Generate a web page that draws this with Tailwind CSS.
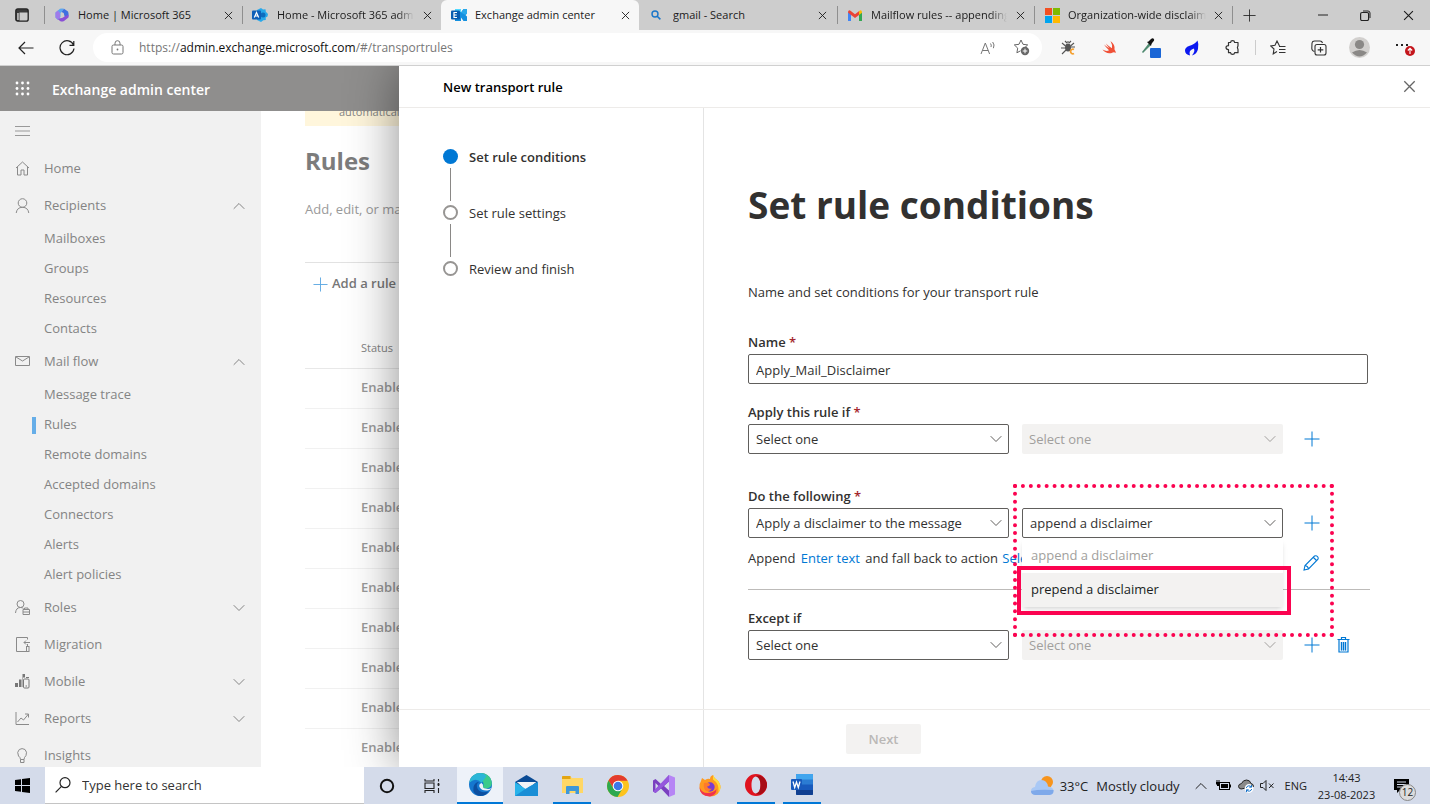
<!DOCTYPE html>
<html lang="en">
<head>
    <meta charset="UTF-8">
    <meta name="viewport" content="width=device-width, initial-scale=1.0">
    <title>Exchange admin center</title>
    <script src="https://cdn.jsdelivr.net/npm/@tailwindcss/browser@4"></script>
</head>
<body class="h-screen flex flex-col overflow-hidden bg-white text-[13px] text-[#323130] font-['Open_Sans','Noto_Sans',sans-serif]">

    <!-- Shared icons -->
    <svg class="hidden">
        <symbol id="x" viewBox="0 0 10 10"><path d="M1 1l8 8M9 1L1 9" fill="none" stroke="currentColor"/></symbol>
        <symbol id="plus" viewBox="0 0 16 16"><path d="M8 .5v15M.5 8h15" fill="none" stroke="currentColor"/></symbol>
        <symbol id="down" viewBox="0 0 12 8"><path d="M.7 1.2L6 6.5l5.300-5.300" fill="none" stroke="currentColor"/></symbol>
        <symbol id="up" viewBox="0 0 12 8"><path d="M.7 6.800L6 1.500l5.300 5.300" fill="none" stroke="currentColor"/></symbol>
    </svg>

    <!-- Tab strip -->
    <div class="h-[30px] shrink-0 flex bg-[#cdcdcd] text-[11px] text-[#1b1b1b]">
        <div class="w-[44px] flex items-center justify-center">
            <svg class="size-[14px]" viewBox="0 0 14 14"><rect x=".8" y=".8" width="12.400" height="12.400" rx="2" fill="none" stroke="#222" stroke-width="1.300"/><path d="M1 1h12v3.500H4.500V13H1z" fill="#222" opacity=".85"/><path d="M2.200 5h1.500v7H2.200z" fill="#cdcdcd"/></svg>
        </div>
        <div class="w-[198px] flex items-center border-l border-[#8f8f8f] my-[6px] pl-[10px] pr-[9px] gap-[9px]">
            <svg class="size-[14px] shrink-0" viewBox="0 0 14 14"><path d="M5 .8Q7 0 9 .8L7 3.500 5.500 5v4L3 12 .5 9.500V4.500z" fill="#5aa7ef"/><path d="M9 .8l4 2.700q.8 1 .5 5L10 10 8.700 5 6.500 4z" fill="#3f6fe0"/><path d="M.5 9l3 1.500L7 10l6.500-3.500v3L9 13q-2 1-4 0z" fill="#8a4fd6"/><path d="M.5 4.500L3 2.500l2 2.500v4l-2 2.500-2.500-2z" fill="#a07bea"/></svg>
            <span class="flex-1 overflow-hidden whitespace-nowrap">Home | Microsoft 365</span>
            <button aria-label="Close tab"><svg class="size-[9px]"><use href="#x"/></svg></button>
        </div>
        <div class="w-[199px] flex items-center border-l border-[#8f8f8f] my-[6px] pl-[9px] pr-[9px] gap-[9px]">
            <svg class="size-[16px] shrink-0" viewBox="0 0 16 16"><path d="M9 1l2 1.500 2.500-.3.300 2.500L16 7l-.5 2.500-1.800 1 .1 2.500-2.500.300L9 15l-4-2V3z" fill="#28a8ea"/><circle cx="11" cy="8" r="2.500" fill="#0f6cbd"/><rect y="3.500" width="9" height="9" rx="1" fill="#0f5fb8"/><path d="M2.300 10.500l2.200-5 2.200 5M3 9h3" fill="none" stroke="#fff" stroke-width="1.200"/></svg>
            <span class="flex-1 overflow-hidden whitespace-nowrap [mask-image:linear-gradient(to_right,#000_88%,transparent)]">Home - Microsoft 365 admin center</span>
            <button aria-label="Close tab"><svg class="size-[9px]"><use href="#x"/></svg></button>
        </div>
        <div class="w-[198px] flex items-center bg-[#f7f7f7] rounded-t-md pl-[10px] pr-[9px] gap-[8px]">
            <svg class="size-[16px] shrink-0" viewBox="0 0 16 16"><path d="M4 2h6v3.500L12.500 2H16v4.500L14.500 8l1.500 1.500V14h-3.500L10 10.500V14H4z" fill="#1490df"/><path d="M4 2h6v3H4z" fill="#50d9ff"/><path d="M12.500 2H16v4.500L14.500 8 10 5.500z" fill="#28a8ea"/><rect y="3.500" width="9" height="9" rx="1" fill="#0a5cb0"/><path d="M6 5.500H3v5h3M3 8h2.700" fill="none" stroke="#fff" stroke-width="1.200"/></svg>
            <span class="flex-1 overflow-hidden whitespace-nowrap">Exchange admin center</span>
            <button aria-label="Close tab"><svg class="size-[9px]"><use href="#x"/></svg></button>
        </div>
        <div class="w-[198px] flex items-center my-[6px] pl-[12px] pr-[10px] gap-[12px]">
            <svg class="size-[10px] shrink-0" viewBox="0 0 10 10"><circle cx="4" cy="4" r="3" fill="none" stroke="#1a76c9" stroke-width="1.400"/><path d="M6.200 6.200L9.400 9.400" stroke="#1a76c9" stroke-width="1.500"/></svg>
            <span class="flex-1 overflow-hidden whitespace-nowrap">gmail - Search</span>
            <button aria-label="Close tab"><svg class="size-[9px]"><use href="#x"/></svg></button>
        </div>
        <div class="w-[197px] flex items-center border-l border-[#8f8f8f] my-[6px] pl-[10px] pr-[9px] gap-[9px]">
            <svg class="w-[14px] h-[11px] shrink-0" viewBox="0 0 14 11"><path d="M0 2v9h3V4z" fill="#4285f4"/><path d="M14 2v9h-3V4z" fill="#34a853"/><path d="M0 2Q.5-.5 2.500.700L7 4.200 11.500.700 11 5 7 8 3 5 0 2.500z" fill="#ea4335"/><path d="M11 1.200Q13.500-.8 14 2v.8L11 5z" fill="#fbbc04"/></svg>
            <span class="flex-1 overflow-hidden whitespace-nowrap [mask-image:linear-gradient(to_right,#000_88%,transparent)]">Mailflow rules -- appending disclaimer</span>
            <button aria-label="Close tab"><svg class="size-[9px]"><use href="#x"/></svg></button>
        </div>
        <div class="w-[199px] flex items-center border-x border-[#8f8f8f] my-[6px] pl-[10px] pr-[9px] gap-[8px]">
            <svg class="size-[15px] shrink-0" viewBox="0 0 15 15"><path d="M0 0h7v7H0z" fill="#f25022"/><path d="M8 0h7v7H8z" fill="#7fba00"/><path d="M0 8h7v7H0z" fill="#00a4ef"/><path d="M8 8h7v7H8z" fill="#ffb900"/></svg>
            <span class="flex-1 overflow-hidden whitespace-nowrap [mask-image:linear-gradient(to_right,#000_88%,transparent)]">Organization-wide disclaimers</span>
            <button aria-label="Close tab"><svg class="size-[9px]"><use href="#x"/></svg></button>
        </div>
        <button class="w-[33px] flex items-center justify-center" aria-label="New tab"><svg class="size-[13px]"><use href="#plus"/></svg></button>
        <div class="ml-auto flex">
            <button class="w-[43px] flex items-center justify-center" aria-label="Minimize"><svg class="w-[10px] h-[2px]"><path d="M0 1h10" stroke="#222"/></svg></button>
            <button class="w-[43px] flex items-center justify-center" aria-label="Restore"><svg class="size-[11px]" viewBox="0 0 11 11"><path d="M3 1h5a2 2 0 0 1 2 2v5" fill="none" stroke="#222"/><rect x=".6" y="2.500" width="8" height="8" rx="1.500" fill="none" stroke="#222" stroke-width="1.200"/></svg></button>
            <button class="w-[43px] flex items-center justify-center" aria-label="Close"><svg class="size-[11px]"><use href="#x"/></svg></button>
        </div>
    </div>

    <!-- Address bar -->
    <div class="h-[36px] shrink-0 flex items-center bg-[#f7f7f7] border-b border-[#d0d0d0] text-[#333]">
        <button class="w-[48px] pl-[18px]" aria-label="Back"><svg class="w-[16px] h-[14px]" viewBox="0 0 16 14"><path d="M7 1L1 7l6 6M1 7h14.500" fill="none" stroke="#222" stroke-width="1.200"/></svg></button>
        <button class="w-[45px] pl-[11px]" aria-label="Refresh"><svg class="size-[16px]" viewBox="0 0 16 16"><path d="M14.500 5A7 7 0 1 0 15 8.500M14.800 1v4.300h-4.300" fill="none" stroke="#222" stroke-width="1.200"/></svg></button>
        <div class="flex-1 h-[29px] flex items-center rounded-full bg-white pl-[18px] pr-[12px]">
            <svg class="w-[13px] h-[15px]" viewBox="0 0 13 15"><rect x="1" y="5" width="11" height="9" rx="1.500" fill="none" stroke="#777"/><path d="M4 5V3.200a2.500 2.500 0 0 1 5 0V5" fill="none" stroke="#777"/><circle cx="6.500" cy="9.500" r=".9" fill="#777"/></svg>
            <div role="textbox" aria-label="Address" class="flex-1 ml-[15px] text-[12px] text-[#767676] whitespace-nowrap">https://<span class="text-[#111]">admin.exchange.microsoft.com</span>/#/transportrules</div>
            <svg class="w-[16px] h-[14px] mr-[17px]" viewBox="0 0 16 14"><path d="M1 13L5.300 2l4.300 11M2.500 9.500h5.700M10.500 2.500q1.300 1.500.5 3.500M12.700 1q2.300 2.800.700 6.200" fill="none" stroke="#777"/></svg>
            <svg class="size-[17px]" viewBox="0 0 17 17"><path d="M8 1l2 4.300 4.700.6-3.400 3.200M8 1L6 5.300l-4.700.6 3.400 3.200-.8 4.700L7.500 11.800" fill="none" stroke="#666"/><circle cx="12" cy="12" r="4.200" fill="#666"/><path d="M12 9.700v4.600M9.700 12h4.600" stroke="#fff"/></svg>
        </div>
        <div class="w-[388px] grid grid-cols-[repeat(5,41px)_4px_repeat(3,41px)_50px] items-center justify-items-center pl-[6px]">
            <svg class="size-[15px]" viewBox="0 0 15 15"><ellipse cx="7" cy="7.500" rx="3" ry="4" fill="#555"/><path d="M7 3V1M4 1l2 2M10 1L8 3M1 3l3.500 3M13 3L9.500 6M0 8h5M1 14l4-4M14 7H9" stroke="#555" stroke-width="1.100"/><path d="M13 9.500a2.300 2.300 0 1 0 0 4" fill="none" stroke="#f5a030" stroke-width="1.800"/></svg>
            <svg class="size-[15px]" viewBox="0 0 15 15"><path d="M8.500 1q5 4 4 8.500 1.500 2 1.300 3.500-1.500-1.300-3-.6Q5 15 .5 9.500q4 2.300 6.500.8Q4 7.500 2 4.500 5.500 7.300 7.500 8.300 5.300 6 3.800 3.500 7 6.500 10 8.300 10.700 5 8.500 1z" fill="#f05138"/></svg>
            <svg class="size-[20px]" viewBox="0 0 20 20"><path d="M1 14l7-9 2 2-8 8z" fill="#4f8a70"/><path d="M6 4l1.500-.5L10 1q2-1.500 3 .3.500 1.400-1 2.500L10.500 6 10 8z" fill="#111"/><rect x="9" y="10" width="11" height="10" rx="1" fill="#1a66d6"/></svg>
            <svg class="w-[15px] h-[16px]" viewBox="0 0 15 16"><path fill-rule="evenodd" d="M13.500.5Q15 4 14 9q-1 5-6 6.500.5-1 1.500-2.200Q11 11 10 8.500 7.500 9 6 11q-1 2 0 4.500Q1 14.500 1 10.500 1 7.500 5 6q6-2 8.500-5.500z" fill="#0b18f0"/></svg>
            <svg class="size-[15px]" viewBox="0 0 15 15"><path d="M3.500 2.500h2.100q.1-1.800 2-1.800t2 1.800H13v3.300l-.6 1.800.6 1.900v3.200H9.600q-.1 1.700-2 1.700t-2-1.700H3.500V9.700Q1 9.500 1 7.600t2.500-1.900z" fill="none" stroke="#333" stroke-width="1.200" stroke-linejoin="round"/></svg>
            <span class="w-px h-[15px] bg-[#ccc]"></span>
            <svg class="size-[16px]" viewBox="0 0 16 16"><path d="M9.500 6L7 1 5 5.300 .8 6l3.200 3-.8 4.800L7 11.500M9 6.500h6.500M9 9.500h6.500M9 12.500h6.500" fill="none" stroke="#333" stroke-width="1.100"/></svg>
            <svg class="size-[16px]" viewBox="0 0 16 16"><path d="M3.500 11.500Q1 11 .8 8.500L1 3q.3-2 2.500-2H9q2 0 2.500 2" fill="none" stroke="#333" stroke-width="1.100"/><rect x="4" y="4.500" width="11" height="10.500" rx="2" fill="none" stroke="#333" stroke-width="1.100"/><path d="M9.500 7v5.600M6.700 9.800h5.600" stroke="#333" stroke-width="1.200"/></svg>
            <svg class="size-[21px]" viewBox="0 0 21 21"><circle cx="10.500" cy="10.500" r="10.500" fill="#d2d0ce"/><circle cx="10.500" cy="7.500" r="4.600" fill="#8a8886"/><path d="M3 15.500q7.500-5 15 0-7.500 8-15 0z" fill="#8a8886"/></svg>
            <svg class="w-[20px] h-[18px]" viewBox="0 0 20 18"><path d="M1 6h2M6 6h2M11 6h2" stroke="#222" stroke-width="2"/><circle cx="15" cy="12" r="5" fill="#c4161c"/><path d="M15 15V9.500M12.800 11.500L15 9.300l2.200 2.200" fill="none" stroke="#fff" stroke-width="1.100"/></svg>
        </div>
    </div>

    <div class="flex-1 min-h-0 flex">

        <!-- Admin center, behind the panel -->
        <div class="w-[399px] shrink-0 flex flex-col overflow-hidden text-[#848484]">
            <header class="h-[45px] shrink-0 flex items-center gap-[22px] pl-[15px] bg-[#8f8e8d] text-white">
                <svg class="size-[15px]" viewBox="0 0 15 15" fill="#fff"><circle cx="2" cy="2" r="1.400"/><circle cx="7.500" cy="2" r="1.400"/><circle cx="13" cy="2" r="1.400"/><circle cx="2" cy="7.500" r="1.400"/><circle cx="7.500" cy="7.500" r="1.400"/><circle cx="13" cy="7.500" r="1.400"/><circle cx="2" cy="13" r="1.400"/><circle cx="7.500" cy="13" r="1.400"/><circle cx="13" cy="13" r="1.400"/></svg>
                <span class="pt-[2px] text-[14px] font-semibold whitespace-nowrap">Exchange admin center</span>
            </header>
            <div class="flex-1 min-h-0 flex">
                <nav class="w-[261px] shrink-0 bg-[#f1f1f1] overflow-hidden">
                    <button class="h-[39px] pl-[15px] flex items-center" aria-label="Menu"><svg class="w-[15px] h-[10px]" viewBox="0 0 15 10"><path d="M0 .5h15M0 5h15M0 9.500h15" stroke="#999"/></svg></button>
                    <a href="#" class="h-[37px] flex items-center pl-[15px] pr-[16px] gap-[14px]">
                        <svg class="size-[15px]" viewBox="0 0 15 15" fill="none" stroke="#8a8a8a"><path d="M1 7l6.500-6L14 7M2.500 6v8H6V9h3v5h3.500V6"/></svg>
                        <span class="flex-1">Home</span>
                    </a>
                    <a href="#" class="h-[37px] flex items-center pl-[15px] pr-[16px] gap-[14px]">
                        <svg class="size-[15px]" viewBox="0 0 15 15" fill="none" stroke="#8a8a8a"><circle cx="7.500" cy="5" r="4.300"/><path d="M1.200 15Q2 9.300 7.500 9.300T13.800 15"/></svg>
                        <span class="flex-1">Recipients</span>
                        <svg class="w-[12px] h-[8px]"><use href="#up"/></svg>
                    </a>
                    <div class="-mb-px">
                        <a href="#" class="h-[30px] flex items-center pl-[44px]">Mailboxes</a>
                        <a href="#" class="h-[30px] flex items-center pl-[44px]">Groups</a>
                        <a href="#" class="h-[30px] flex items-center pl-[44px]">Resources</a>
                        <a href="#" class="h-[30px] flex items-center pl-[44px]">Contacts</a>
                    </div>
                    <a href="#" class="h-[37px] flex items-center pl-[15px] pr-[16px] gap-[14px]">
                        <svg class="size-[15px]" viewBox="0 0 15 15" fill="none" stroke="#8a8a8a"><path d="M.5 2.500h14v9H.5zM1 3l6.500 4L14 3"/></svg>
                        <span class="flex-1">Mail flow</span>
                        <svg class="w-[12px] h-[8px]"><use href="#up"/></svg>
                    </a>
                    <div class="-mb-px">
                        <a href="#" class="h-[30px] flex items-center pl-[44px]">Message trace</a>
                        <a href="#" class="h-[30px] flex items-center pl-[32px] gap-[8px]"><span class="w-[4px] h-[17px] bg-[#66aee8]"></span>Rules</a>
                        <a href="#" class="h-[30px] flex items-center pl-[44px]">Remote domains</a>
                        <a href="#" class="h-[30px] flex items-center pl-[44px]">Accepted domains</a>
                        <a href="#" class="h-[30px] flex items-center pl-[44px]">Connectors</a>
                        <a href="#" class="h-[30px] flex items-center pl-[44px]">Alerts</a>
                        <a href="#" class="h-[30px] flex items-center pl-[44px]">Alert policies</a>
                    </div>
                    <a href="#" class="h-[37px] flex items-center pl-[15px] pr-[16px] gap-[14px]">
                        <svg class="size-[15px]" viewBox="0 0 15 15" fill="none" stroke="#8a8a8a"><circle cx="5.500" cy="4" r="3.500"/><path d="M.5 13Q1 7.500 5.500 7.500q2 0 3 1M8 9.500h6.500v5H8zM9.500 9.500V8H13v1.500M8 12h6.500"/></svg>
                        <span class="flex-1">Roles</span>
                        <svg class="w-[12px] h-[8px]"><use href="#down"/></svg>
                    </a>
                    <a href="#" class="h-[37px] flex items-center pl-[15px] pr-[16px] gap-[14px]">
                        <svg class="size-[15px]" viewBox="0 0 15 15" fill="none" stroke="#8a8a8a"><path d="M12.500 2.500v-2h-11v14h10M9 5.500h6M11 3.500l-2 2 2 2M12.500 7v2.500"/><rect x="11.500" y="9.500" width="2.500" height="5"/></svg>
                        <span class="flex-1">Migration</span>
                    </a>
                    <a href="#" class="h-[37px] flex items-center pl-[15px] pr-[16px] gap-[14px]">
                        <svg class="size-[15px]" viewBox="0 0 15 15"><path d="M0 9h3v4H0zM4 5.500h2.500V13H4zM7.500 0H10v3.500H8V13h-.5zM11 3h3v1h-3z" fill="#777"/><rect x="8.500" y="5" width="5.500" height="9" rx="1" fill="none" stroke="#777"/><path d="M10.500 12h1.500" stroke="#777"/></svg>
                        <span class="flex-1">Mobile</span>
                        <svg class="w-[12px] h-[8px]"><use href="#down"/></svg>
                    </a>
                    <a href="#" class="h-[37px] flex items-center pl-[15px] pr-[16px] gap-[14px]">
                        <svg class="size-[15px]" viewBox="0 0 15 15" fill="none" stroke="#8a8a8a"><path d="M1 1v12.500h13M2.500 11l3.500-4 2.500 2 5-6M10 3h3.500v3.500"/></svg>
                        <span class="flex-1">Reports</span>
                        <svg class="w-[12px] h-[8px]"><use href="#down"/></svg>
                    </a>
                    <a href="#" class="h-[37px] flex items-center pl-[15px] pr-[16px] gap-[14px]">
                        <svg class="size-[15px]" viewBox="0 0 15 15" fill="none" stroke="#8a8a8a"><path d="M5.500 11.500Q5.500 9.500 3.500 8q-2-4 .8-6.500Q7-.3 10 1.500q2.500 2.500 1 6-2 2-2 4zM5.500 11.500v3H9v-3"/></svg>
                        <span class="flex-1">Insights</span>
                    </a>
                </nav>
                <main class="flex-1 pl-[44px] overflow-hidden whitespace-nowrap">
                    <p class="h-[15px] pl-[34px] bg-[#fff6dc] overflow-hidden text-[11px] leading-[2px]">automatically</p>
                    <h1 class="mt-[18px] text-[24px] leading-[34px] font-bold text-[#7c7c7c]">Rules</h1>
                    <p class="mt-[21px] leading-[20px] text-[#9a9a9a]">Add, edit, or manage rules</p>
                    <div class="mt-[43px] h-[43px] border-t border-[#e2e2e2] flex items-center gap-[4px] pl-[8px] font-semibold text-[#777]">
                        <svg class="size-[15px] text-[#5ea9e2]"><use href="#plus"/></svg>
                        <button>Add a rule</button>
                    </div>
                    <table class="mt-[24px] w-full text-left">
                        <thead>
                            <tr class="h-[39px] border-b border-[#e8e8e8]"><th class="pl-[56px] font-normal text-[11px]">Status</th></tr>
                        </thead>
                        <tbody class="font-semibold text-[#999]">
                            <tr class="h-[40px] border-b border-[#f1f1f1]"><td class="pl-[56px]">Enabled</td></tr>
                            <tr class="h-[40px] border-b border-[#f1f1f1]"><td class="pl-[56px]">Enabled</td></tr>
                            <tr class="h-[40px] border-b border-[#f1f1f1]"><td class="pl-[56px]">Enabled</td></tr>
                            <tr class="h-[40px] border-b border-[#f1f1f1]"><td class="pl-[56px]">Enabled</td></tr>
                            <tr class="h-[40px] border-b border-[#f1f1f1]"><td class="pl-[56px]">Enabled</td></tr>
                            <tr class="h-[40px] border-b border-[#f1f1f1]"><td class="pl-[56px]">Enabled</td></tr>
                            <tr class="h-[40px] border-b border-[#f1f1f1]"><td class="pl-[56px]">Enabled</td></tr>
                            <tr class="h-[40px] border-b border-[#f1f1f1]"><td class="pl-[56px]">Enabled</td></tr>
                            <tr class="h-[40px] border-b border-[#f1f1f1]"><td class="pl-[56px]">Enabled</td></tr>
                            <tr class="h-[38px]"><td class="pl-[56px]">Enabled</td></tr>
                        </tbody>
                    </table>
                </main>
            </div>
        </div>

        <!-- New transport rule panel -->
        <section class="flex-1 min-w-0 relative z-10 flex flex-col bg-white shadow-[0_0_48px_rgba(0,0,0,0.45)] [clip-path:inset(0_0_0_-60px)]">
            <div class="h-[42px] shrink-0 flex items-center justify-between pl-[44px] pr-[14px] border-b border-[#edebe9]">
                <h2 class="pt-[2px] font-semibold text-black">New transport rule</h2>
                <button class="text-[#666]" aria-label="Close"><svg class="size-[13px]"><use href="#x"/></svg></button>
            </div>
            <div class="flex-1 min-h-0 flex">
                <ol class="w-[305px] shrink-0 border-r border-[#e4e4e4] pl-[44px] pt-[41px]">
                    <li class="flex gap-[11px] h-[56px]">
                        <div class="w-[15px] flex flex-col items-center gap-[4px]"><span class="size-[15px] rounded-full bg-[#0078d4]"></span><span class="w-px h-[33px] bg-[#8a8886]"></span></div>
                        <span class="leading-[16px] font-semibold">Set rule conditions</span>
                    </li>
                    <li class="flex gap-[11px] h-[56px]">
                        <div class="w-[15px] flex flex-col items-center gap-[4px]"><span class="size-[15px] rounded-full border-2 border-[#979593]"></span><span class="w-px h-[33px] bg-[#8a8886]"></span></div>
                        <span class="leading-[16px]">Set rule settings</span>
                    </li>
                    <li class="flex gap-[11px] h-[56px]">
                        <div class="w-[15px]"><span class="block size-[15px] rounded-full border-2 border-[#979593]"></span></div>
                        <span class="leading-[16px]">Review and finish</span>
                    </li>
                </ol>
                <form class="flex-1 min-w-0 pl-[44px] pr-[60px]">
                    <h1 class="mt-[70px] text-[37px] leading-[54px] font-bold">Set rule conditions</h1>
                    <p class="mt-[50px] leading-[20px]">Name and set conditions for your transport rule</p>

                    <label for="name" class="mt-[30px] block leading-[20px] font-semibold">Name <span class="text-[#a4262c]">*</span></label>
                    <input id="name" type="text" value="Apply_Mail_Disclaimer" class="mt-[2px] block w-full max-w-[620px] h-[30px] border border-[#605e5c] rounded-xs px-[7px] pt-[2px]">

                    <label for="if" class="mt-[18px] block leading-[20px] font-semibold">Apply this rule if <span class="text-[#a4262c]">*</span></label>
                    <div class="mt-[2px] flex items-center gap-[13px]">
                        <div class="relative w-[261px]">
                            <select id="if" class="appearance-none w-full h-[30px] border border-[#605e5c] rounded-xs px-[7px] pt-[2px]"><option>Select one</option></select>
                            <svg class="absolute right-[7px] top-[11px] w-[12px] h-[8px] text-[#605e5c] pointer-events-none"><use href="#down"/></svg>
                        </div>
                        <div class="relative w-[261px]">
                            <select aria-label="Condition" disabled class="appearance-none w-full h-[30px] bg-[#f3f2f1] rounded-xs px-[7px] pt-[2px] text-[#a19f9d] disabled:opacity-100"><option>Select one</option></select>
                            <svg class="absolute right-[7px] top-[11px] w-[12px] h-[8px] text-[#a19f9d] pointer-events-none"><use href="#down"/></svg>
                        </div>
                        <button type="button" class="ml-[8px] text-[#0078d4]" aria-label="Add condition"><svg class="size-[16px]"><use href="#plus"/></svg></button>
                    </div>

                    <div class="relative mt-[32px] max-w-[622px]">
                        <label for="do" class="block leading-[20px] font-semibold">Do the following <span class="text-[#a4262c]">*</span></label>
                        <div class="mt-[2px] flex items-center gap-[13px]">
                            <div class="relative w-[261px]">
                                <select id="do" class="appearance-none w-full h-[30px] border border-[#605e5c] rounded-xs px-[7px] pt-[2px]"><option>Apply a disclaimer to the message</option></select>
                                <svg class="absolute right-[7px] top-[11px] w-[12px] h-[8px] text-[#605e5c] pointer-events-none"><use href="#down"/></svg>
                            </div>
                            <div class="relative w-[261px]">
                                <select aria-label="Action" class="appearance-none w-full h-[30px] border border-[#605e5c] rounded-xs px-[7px] pt-[2px]"><option>append a disclaimer</option></select>
                                <svg class="absolute right-[7px] top-[11px] w-[12px] h-[8px] text-[#605e5c] pointer-events-none"><use href="#down"/></svg>
                                <ul class="absolute z-10 top-[31px] inset-x-0 bg-white shadow-md" role="listbox">
                                    <li class="h-[34px] px-[9px] flex items-center text-[#a19f9d]" role="option">append a disclaimer</li>
                                    <li class="h-[34px] px-[9px] flex items-center bg-[#f3f2f1] text-[#201f1e]" role="option">prepend a disclaimer</li>
                                </ul>
                            </div>
                            <button type="button" class="ml-[8px] text-[#0078d4]" aria-label="Add action"><svg class="size-[16px]"><use href="#plus"/></svg></button>
                        </div>
                        <div class="h-[52px] pt-[10px] flex items-start justify-between border-b border-[#bdbbb9] pr-[51px]">
                            <p class="leading-[20px] whitespace-nowrap">Append <a href="#" class="mx-[2px] text-[#0078d4]">Enter text</a> and fall back to action <a href="#" class="ml-px text-[#0078d4]">Select one</a></p>
                            <button type="button" class="mt-[7px]" aria-label="Edit"><svg class="size-[16px]" viewBox="0 0 16 16"><path d="M1 15l1-4.500L11.500 1q1.800-.8 3 .5 1.200 1.500.3 3L5.500 14zM2 10.500q3 .5 3.500 3.500M10.500 2.500l3.500 3.500" fill="none" stroke="#0078d4" stroke-width="1.100"/></svg></button>
                        </div>
                        <!-- callouts -->
                        <div class="absolute z-20 left-[265px] -top-[2px] w-[321px] h-[153px] border-4 border-dotted border-[#fb0350] pointer-events-none"></div>
                        <div class="absolute z-20 left-[269px] top-[80px] w-[274px] h-[49px] border-4 border-[#fb0350] pointer-events-none"></div>
                    </div>

                    <label for="except" class="mt-[18px] block leading-[20px] font-semibold">Except if</label>
                    <div class="mt-[2px] flex items-center gap-[13px]">
                        <div class="relative w-[261px]">
                            <select id="except" class="appearance-none w-full h-[30px] border border-[#605e5c] rounded-xs px-[7px] pt-[2px]"><option>Select one</option></select>
                            <svg class="absolute right-[7px] top-[11px] w-[12px] h-[8px] text-[#605e5c] pointer-events-none"><use href="#down"/></svg>
                        </div>
                        <div class="relative w-[261px]">
                            <select aria-label="Exception" disabled class="appearance-none w-full h-[30px] bg-[#f3f2f1] rounded-xs px-[7px] pt-[2px] text-[#a19f9d] disabled:opacity-100"><option>Select one</option></select>
                            <svg class="absolute right-[7px] top-[11px] w-[12px] h-[8px] text-[#a19f9d] pointer-events-none"><use href="#down"/></svg>
                        </div>
                        <button type="button" class="ml-[8px] text-[#0078d4]" aria-label="Add exception"><svg class="size-[16px]"><use href="#plus"/></svg></button>
                        <button type="button" class="ml-[4px]" aria-label="Delete"><svg class="w-[13px] h-[16px]" viewBox="0 0 13 16"><path d="M.5 2.500h12M4.500 2.500v-2h4v2M2 2.500v12.500h9V2.500" fill="none" stroke="#0078d4" stroke-width="1.200"/><path d="M3.500 5h6v8.500h-6z" fill="#9fcbef"/><path d="M4.500 5v8.500M6.500 5v8.500M8.500 5v8.500" stroke="#0078d4"/></svg></button>
                    </div>
                </form>
            </div>
            <div class="h-[58px] shrink-0 flex border-t border-[#edebe9]">
                <div class="w-[305px] border-r border-[#e4e4e4]"></div>
                <div class="flex-1 pl-[142px] flex items-center"><button disabled class="w-[75px] h-[30px] pt-[2px] rounded-xs bg-[#f3f2f1] font-semibold text-[#bab8b6]">Next</button></div>
            </div>
        </section>
    </div>

    <!-- Taskbar -->
    <footer class="h-[37px] shrink-0 flex bg-[#d4dbea] text-[#222]">
        <button class="w-[45px] flex items-center justify-center" aria-label="Start"><svg class="size-[15px]" viewBox="0 0 15 15"><path d="M0 2l6-.8V7H0zM7 1l8-1v7H7zM0 8h6v5.800L0 13zM7 8h8v7l-8-1z" fill="#000"/></svg></button>
        <div class="w-[319px] flex items-center gap-[11px] pl-[10px] bg-white border-b border-[#c4c4c4]">
            <svg class="size-[16px]" viewBox="0 0 16 16"><circle cx="10" cy="5.700" r="5" fill="none" stroke="#222" stroke-width="1.200"/><path d="M6.500 9.300L.6 15.300" stroke="#222" stroke-width="1.200"/></svg>
            <input type="text" aria-label="Search" placeholder="Type here to search" class="flex-1 min-w-0 pt-[2px] outline-none placeholder:text-[#333]">
        </div>
        <button class="w-[46px] flex items-center justify-center" aria-label="Cortana"><svg class="size-[16px]" viewBox="0 0 16 16"><circle cx="8" cy="8" r="6.200" fill="none" stroke="#111" stroke-width="2"/></svg></button>
        <button class="w-[47px] pr-[3px] flex items-center justify-center" aria-label="Task view"><svg class="size-[16px]" viewBox="0 0 16 16"><path d="M1 1v2h9V1M1 15v-2.500h9V15M1 5h9v5.500H1zM14.500 1v2.500M14.500 5v3M14.500 10v5" fill="none" stroke="#222" stroke-width="1.100"/><path d="M13.500 5.500h2v2h-2z" fill="#222"/></svg></button>
        <button class="w-[46px] flex items-center justify-center bg-[#eef2f9] border-b-2 border-[#0078d7]" aria-label="Edge"><svg class="size-[23px]" viewBox="0 0 23 23"><circle cx="11.500" cy="11.500" r="11.500" fill="#1577cf"/><path d="M.5 9.500Q2 .5 11.500 0 20 0 22.500 8q1.500 6-4 7.500-5 .3-4.500-2 1.500-3-1-5.500Q7 3.500 .5 9.500z" fill="#3ccb8b"/><path d="M.5 9.500Q2 .5 11.500 0q4 .5 6 3-5 7-5 7Q7 4 .5 9.500z" fill="#2bb5d8"/><path d="M10 9q-3.500 2-1.500 6.500 3 5.500 11 3-2.500 4-8 4.500Q3 22 4.500 14 6 9 10 9z" fill="#0c4fa0"/><path d="M12.500 10q-3 1-2 4 2 4 8 3.500 3-.5 4-2.500-3 1.500-6 .5-3-.5-2.500-2.500.5-1.500-1.500-3z" fill="#eef2f9"/></svg></button>
        <button class="w-[46px] flex items-center justify-center" aria-label="Mail"><svg class="w-[23px] h-[21px]" viewBox="0 0 23 21"><path d="M0 7l11.500-7L23 7v5H0z" fill="#0a4a94"/><path d="M2 7h19l-9.500 9z" fill="#f1f4f7"/><path d="M0 7l11.500 7.500L23 7v14H0z" fill="#29b3ea"/><path d="M0 21l14-9.500L23 7v14z" fill="#1a8ed6"/><path d="M2 7h19l-8.500 5.500z" fill="#f1f4f7"/></svg></button>
        <button class="w-[38px] mx-[4px] flex items-center justify-center border-b-2 border-[#0078d7]" aria-label="File Explorer"><svg class="w-[21px] h-[18px]" viewBox="0 0 21 18"><path d="M0 1q0-1 1-1h7l2 2H21v15H0z" fill="#ffd766"/><path d="M0 1q0-1 1-1h7.500v3H0z" fill="#e3a512"/><path d="M4 18v-7q0-1 1-1h11q1 0 1 1v7h-3.500v-3h-6v3z" fill="#3e97d8"/></svg></button>
        <button class="w-[46px] flex items-center justify-center" aria-label="Chrome"><svg class="size-[22px]" viewBox="0 0 22 22"><circle cx="11" cy="11" r="11" fill="#fcc31e"/><path d="M1.500 5.500A11 11 0 0 1 20.600 5.800H11L6.500 13.500z" fill="#e33b2e"/><path d="M1.500 5.500A11 11 0 0 0 10.500 22l5-8.500h-9z" fill="#2da94f"/><circle cx="11" cy="11" r="5.300" fill="#fff"/><circle cx="11" cy="11" r="4.300" fill="#3b78e7"/></svg></button>
        <button class="w-[46px] flex items-center justify-center" aria-label="Visual Studio"><svg class="w-[22px] h-[22px]" viewBox="0 0 22 22"><path fill-rule="evenodd" d="M0 5.500L2.500 4 8 9l8-9v22L8 13.500 2.500 18 0 16.500zM2.500 8v6.500L5.500 11zM16 6.500L11 11l5 4.500z" fill="#7a3fc0"/><path d="M0 16.500L16 0v6.500L2.500 18z" fill="#9558dd"/><path d="M16 0l6 2.500v17L16 22z" fill="#b685f5"/></svg></button>
        <button class="w-[46px] flex items-center justify-center" aria-label="Firefox"><svg class="size-[22px]" viewBox="0 0 22 22"><path d="M2 6l1-3 3 2q3-2 5-1 0-3 3-4 1 3 4 5 3.500 3 3.500 7.500-1 9-10.500 9Q.5 21 .5 12 .5 8 2 6z" fill="#ff9a1f"/><path d="M14 0q1 3 4 5 3.500 3 3.500 7.500 0 3-2 5 1-9-5.500-13z" fill="#ffdc3a"/><path d="M.5 12q2 6 8 6t9-4q0 6-6.500 7.500Q.5 21 .5 12z" fill="#f0324f"/><circle cx="11" cy="12" r="4.700" fill="#7a3bd0"/><path d="M5 8q4-1 6 1 0 2-3 2.500 1 3 5 2-3 4-6.500 2Q4 13 5 8z" fill="#ff7a2a"/></svg></button>
        <button class="w-[38px] mx-[4px] flex items-center justify-center border-b-2 border-[#0078d7]" aria-label="Opera"><svg class="size-[22px]" viewBox="0 0 22 22"><path fill-rule="evenodd" d="M11 0a11 11 0 1 0 0 22 11 11 0 0 0 0-22zM11 2.500c3 0 4.500 4 4.500 8.500s-1.500 8.500-4.500 8.500-4.500-4-4.500-8.500S8 2.500 11 2.500z" fill="#e0131f"/><path d="M11 2.500q3-2 6 0 5 3.500 5 8.500t-5 8.500q-3 2-6 0 4.500-1.500 4.500-8.500T11 2.500z" fill="#a80d16"/></svg></button>
        <button class="w-[38px] mx-[4px] flex items-center justify-center border-b-2 border-[#0078d7]" aria-label="Word"><svg class="w-[22px] h-[21px]" viewBox="0 0 22 21"><rect x="5" width="17" height="21" rx="1" fill="#2b7cd3"/><path d="M5 1q0-1 1-1h15q1 0 1 1v4.500H5z" fill="#41a5ee"/><path d="M5 10.500h17V16H5z" fill="#185abd"/><path d="M5 16h17v4q0 1-1 1H6q-1 0-1-1z" fill="#103f91"/><rect y="5" width="11" height="11" rx="1" fill="#185abd"/><path d="M2 7.500L3.700 13.500 5.500 8l1.800 5.500L9 7.500" fill="none" stroke="#fff" stroke-width="1.300"/></svg></button>

        <div class="ml-auto flex items-center whitespace-nowrap">
            <svg class="w-[23px] h-[20px]" viewBox="0 0 23 20"><circle cx="16" cy="6" r="6" fill="#f7941d"/><path d="M4 19q-4-.5-4-4t4-4Q5 4 10.500 4T17 10.500q5.500.5 5.500 4.500 0 3.500-4 4z" fill="#a9c8f5"/><path d="M4 19q-4-.5-4-4 8-2 22.500-1v1q0 3.500-4 4z" fill="#7fa9ea"/></svg>
            <span class="ml-[6px] pt-[2px]">33°C</span><span class="ml-[8px] pt-[2px]">Mostly cloudy</span>
            <svg class="ml-[15px] w-[12px] h-[8px]"><use href="#up"/></svg>
            <svg class="ml-[9px] w-[15px] h-[11px]" viewBox="0 0 15 11"><rect x="3.500" y="2.500" width="10" height="7" fill="none" stroke="#000"/><path d="M5 4h7v4H5zM14 4.500h1v3h-1zM0 2h4v2.500H3V6H1V4.500H0zM.5 0h1v2h-1zM2.500 0h1v2h-1z" fill="#000"/></svg>
            <svg class="ml-[7px] w-[16px] h-[14px]" viewBox="0 0 16 14"><path d="M3 10Q.5 9.500.5 7.300T3.500 4.500Q5 1 8.500 1T13 4.500q2.500.5 2.500 3z" fill="#8a8a8a" stroke="#222"/><circle cx="11" cy="9.500" r="4.400" fill="#fff"/><path d="M8.300 9a2.800 2.800 0 0 1 5-1M13.700 10a2.800 2.800 0 0 1-5 1M13.500 6v2.200h-2.200M8.500 13v-2.200h2.200" fill="none" stroke="#1b74c9"/></svg>
            <svg class="ml-[6px] w-[15px] h-[11px]" viewBox="0 0 15 11"><path d="M.5 3.500h2.500l3-3v10l-3-3H.5zM9 3.500l4.500 4.500M13.500 3.500L9 8" fill="none" stroke="#222"/></svg>
            <span class="ml-[10px] pt-[2px] text-[11px]">ENG</span>
            <div class="w-[79px] text-center text-[11px] leading-[17px]"><p>14:43</p><p>23-08-2023</p></div>
            <button class="relative w-[44px] h-[37px] pr-[14px]" aria-label="Notifications">
                <svg class="mx-auto w-[15px] h-[14px]" viewBox="0 0 15 14"><path d="M0 0h15v11H6l-3 3v-3H0z" fill="#000"/><path d="M3 3h9M3 5.500h9M3 8h6" stroke="#d4dbea"/></svg>
                <span class="absolute left-[13px] top-[17px] size-[17px] rounded-full border border-[#888] bg-[#dcdcdc] text-[10px] leading-[15px]">12</span>
            </button>
        </div>
    </footer>
</body>
</html>
